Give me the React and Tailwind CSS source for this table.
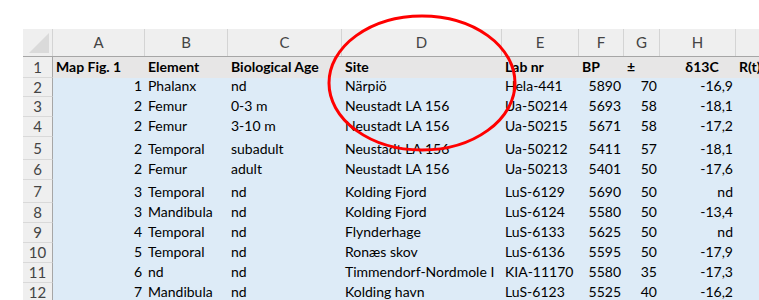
const cols = [
  { letter: "A", w: 92 },
  { letter: "B", w: 83 },
  { letter: "C", w: 114 },
  { letter: "D", w: 160 },
  { letter: "E", w: 77 },
  { letter: "F", w: 45 },
  { letter: "G", w: 36 },
  { letter: "H", w: 76 },
  { letter: "I", w: 80 },
];

const header = ["Map Fig. 1", "Element", "Biological Age", "Site", "Lab nr", "BP", "±", "δ13C", "R(t)"];

const rows = [
  [1, "Phalanx", "nd", "Närpiö", "Hela-441", 5890, 70, "-16,9"],
  [2, "Femur", "0-3 m", "Neustadt LA 156", "Ua-50214", 5693, 58, "-18,1"],
  [2, "Femur", "3-10 m", "Neustadt LA 156", "Ua-50215", 5671, 58, "-17,2"],
  [2, "Temporal", "subadult", "Neustadt LA 156", "Ua-50212", 5411, 57, "-18,1"],
  [2, "Femur", "adult", "Neustadt LA 156", "Ua-50213", 5401, 50, "-17,6"],
  [3, "Temporal", "nd", "Kolding Fjord", "LuS-6129", 5690, 50, "nd"],
  [3, "Mandibula", "nd", "Kolding Fjord", "LuS-6124", 5580, 50, "-13,4"],
  [4, "Temporal", "nd", "Flynderhage", "LuS-6133", 5625, 50, "nd"],
  [5, "Temporal", "nd", "Ronæs skov", "LuS-6136", 5595, 50, "-17,9"],
  [6, "nd", "nd", "Timmendorf-Nordmole I", "KIA-11170", 5580, 35, "-17,3"],
  [7, "Mandibula", "nd", "Kolding havn", "LuS-6123", 5525, 40, "-16,2"],
];

// row heights in px, row 1 first
const heights = [21, 19, 20, 20, 23, 20, 23, 20, 20, 20, 20, 20];

// which columns are right aligned numbers
const rightCols = [0, 5, 6, 7];

function Cell({ w, right, bold, children }) {
  return (
    <div
      className={`shrink-0 flex items-end pb-[1px] px-[3px] whitespace-nowrap overflow-visible ${
        right ? "justify-end" : "justify-start"
      } ${bold ? "font-bold" : ""}`}
      style={{ width: w }}
    >
      {children}
    </div>
  );
}

export default function App() {
  return (
    <div
      className="relative w-[759px] h-[300px] overflow-hidden bg-white text-black"
      style={{ fontFamily: "Lato, 'Open Sans', sans-serif" }}
    >
      <div className="pt-[29px] pl-[23px] text-[14px] w-[900px]">
        {/* column letters */}
        <div className="flex h-[28px] bg-[#efefef] border-b border-[#a6a6a6]">
          <div className="w-[30px] shrink-0 relative border-r border-[#d4d4d4]">
            <div className="absolute right-[3px] bottom-[3px] w-0 h-0 border-l-[20px] border-l-transparent border-b-[20px] border-b-[#dadada]" />
          </div>
          {cols.map((c) => (
            <div
              key={c.letter}
              className="shrink-0 flex items-center justify-center border-r border-[#d4d4d4] text-[15px] text-[#444]"
              style={{ width: c.w }}
            >
              {c.letter}
            </div>
          ))}
        </div>

        {/* row 1 */}
        <div className="flex" style={{ height: heights[0] }}>
          <div className="w-[30px] shrink-0 flex items-center justify-center bg-[#efefef] border-r border-b border-r-[#a6a6a6] border-b-[#d9d9d9] text-[15px] text-[#444]">
            1
          </div>
          <div className="flex bg-[#e7e6e6] flex-1">
            {header.map((h, i) => (
              <Cell key={i} w={cols[i].w} bold right={false}>
                {i === 7 ? <span className="w-full text-center pl-[8px]">{h}</span> : h}
              </Cell>
            ))}
          </div>
        </div>

        {rows.map((r, ri) => (
          <div key={ri} className="flex" style={{ height: heights[ri + 1] }}>
            <div className="w-[30px] shrink-0 flex items-center justify-center bg-[#efefef] border-r border-b border-r-[#a6a6a6] border-b-[#d9d9d9] text-[15px] text-[#444]">
              {ri + 2}
            </div>
            <div className="flex bg-[#ddebf7] flex-1">
              {r.map((v, ci) => (
                <Cell key={ci} w={cols[ci].w} right={rightCols.includes(ci)}>
                  {v}
                </Cell>
              ))}
            </div>
          </div>
        ))}
      </div>

      {/* hand drawn circle */}
      <svg className="absolute left-0 top-0 pointer-events-none" width="759" height="300">
        <ellipse cx="422" cy="83" rx="93" ry="67" fill="none" stroke="#ff0000" strokeWidth="3" />
      </svg>
    </div>
  );
}
